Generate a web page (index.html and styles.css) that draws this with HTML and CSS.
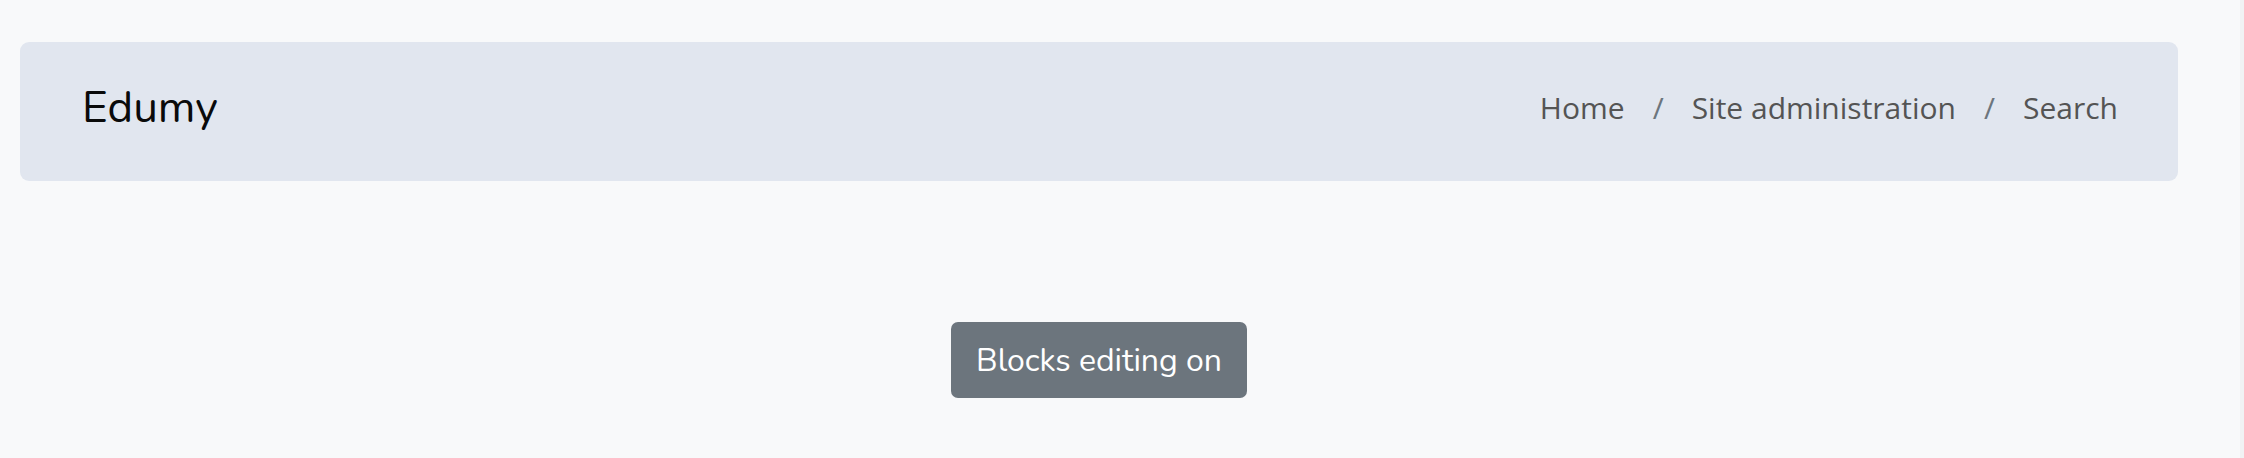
FILE: index.html
```html
<!DOCTYPE html>
<html lang="en">
<head>
<meta charset="utf-8">
<title>Search</title>
<link rel="stylesheet" href="styles.css">
</head>
<body>
<div class="page">
  <header class="page-header">
    <div class="brand">Edumy</div>
    <nav class="breadcrumb">
      <a class="crumb" href="#">Home</a>
      <span class="sep">/</span>
      <a class="crumb" href="#">Site administration</a>
      <span class="sep">/</span>
      <span class="crumb">Search</span>
    </nav>
  </header>
  <div class="actions">
    <button class="btn-secondary" type="button">Blocks editing on</button>
  </div>
</div>
</body>
</html>
```
FILE: styles.css
```css
html, body {
  margin: 0;
  padding: 0;
  background: #f8f9fa;
}
body {
  height: 458px;
  overflow: hidden;
  box-shadow: inset -4px 0 0 #f1f2f4;
}
.page {
  width: 2158px;
  padding: 42px 0 0 20px;
}
.page-header {
  height: 139px;
  box-sizing: border-box;
  background: #e1e6ef;
  border-radius: 9px;
  display: flex;
  align-items: center;
  justify-content: space-between;
  padding: 0 60px 0 62px;
}
.brand {
  font-family: "Nunito", "Lato", "Open Sans", sans-serif;
  font-size: 44px;
  color: #0a0a0a;
  padding-bottom: 7px;
}
.breadcrumb {
  display: flex;
  align-items: center;
  gap: 28px;
  font-family: "Open Sans", sans-serif;
  font-size: 30px;
  color: #545454;
  padding-bottom: 9px;
}
.crumb {
  color: #545454;
  text-decoration: none;
}
.sep {
  color: #6c757d;
}
.actions {
  display: flex;
  justify-content: center;
  padding-top: 141px;
}
.btn-secondary {
  width: 296px;
  height: 76px;
  background: #6c757d;
  color: #ffffff;
  border: none;
  border-radius: 7px;
  font-family: "Nunito", "Lato", sans-serif;
  font-size: 32px;
  padding: 0;
}
```
